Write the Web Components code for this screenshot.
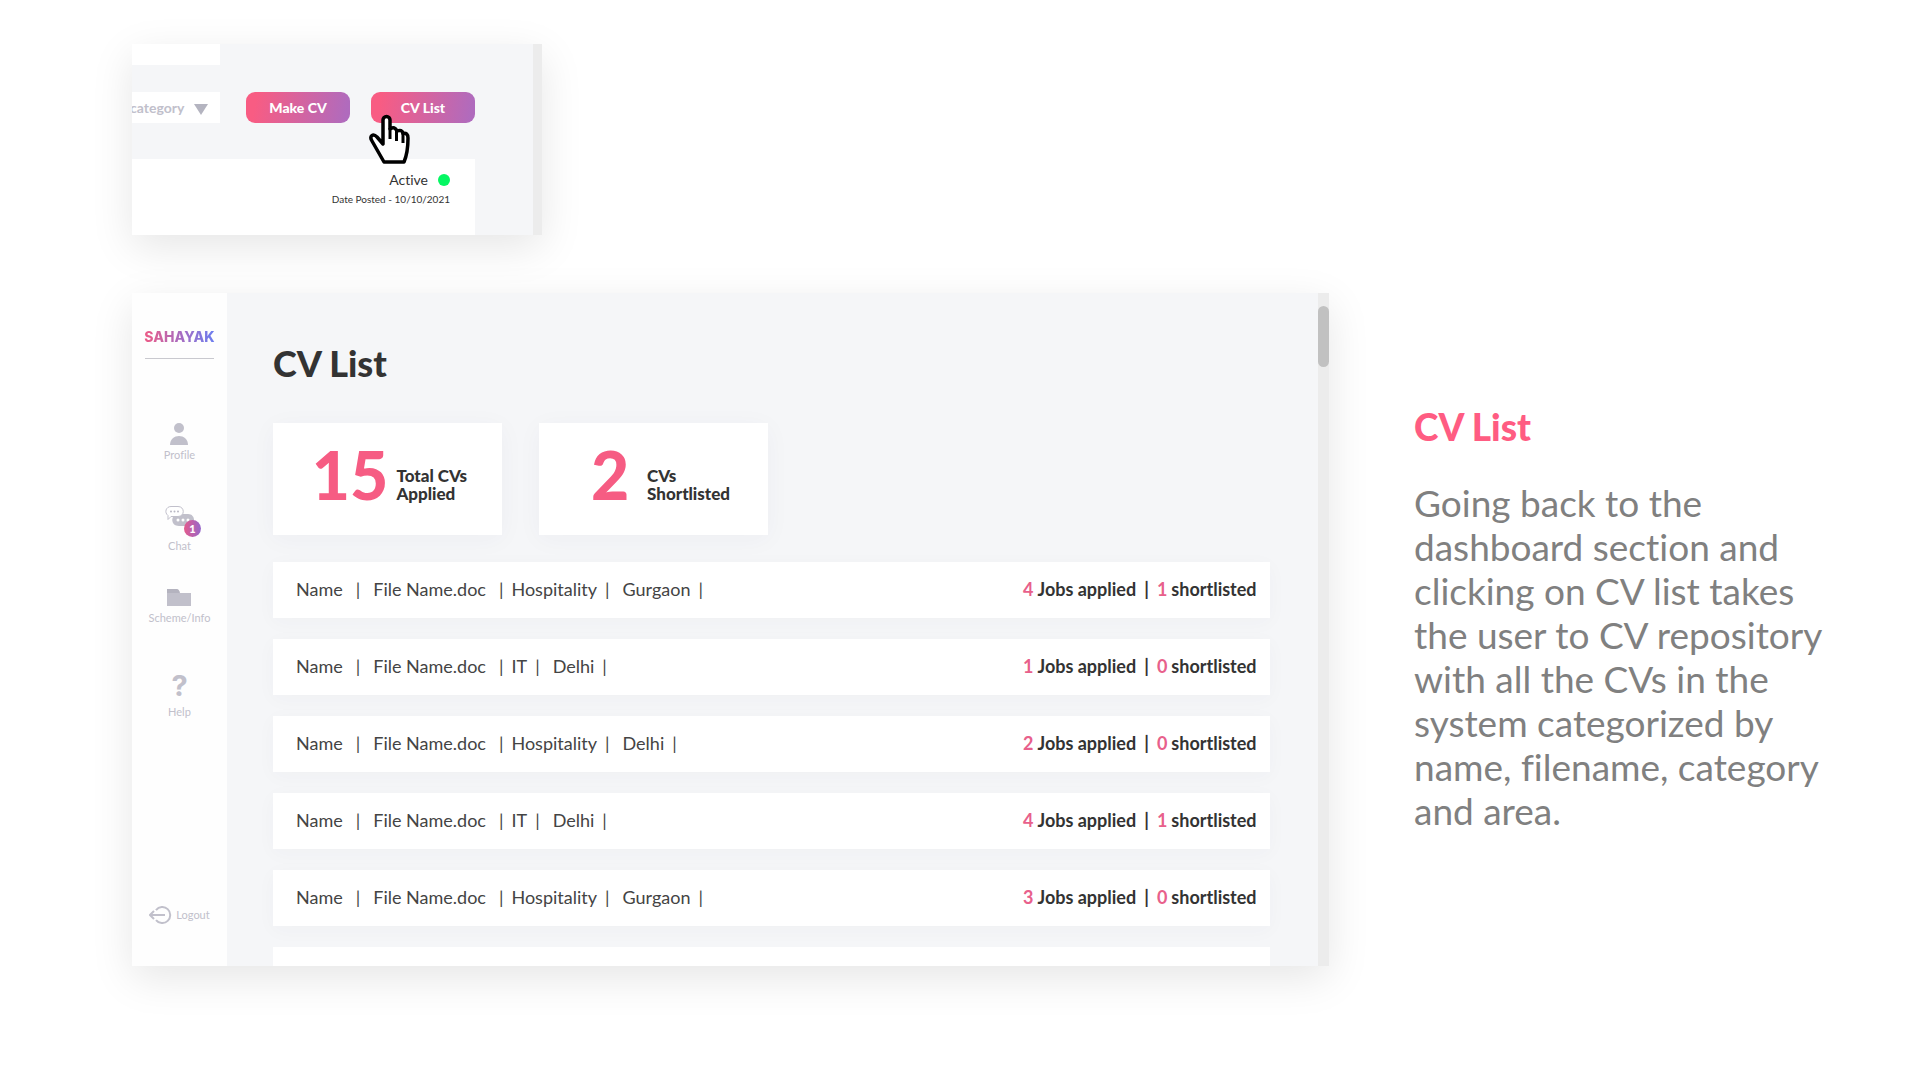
<!DOCTYPE html>
<html lang="en">
<head>
<meta charset="utf-8">
<meta name="viewport" content="width=device-width, initial-scale=1">
<title>Sahayak - CV List</title>
<style>
  * {
    box-sizing: border-box;
  }
  body {
    margin: 0;
    background: #fff;
    color: #333;
    font-family: Lato, "Open Sans", sans-serif;
    font-variant-ligatures: none;
    --pink: #f65c83;
    --violet: #b06bbd;
    --muted: #c1c0cb;
    --surface: #f5f6f8;
  }
</style>
</head>
<body>
<case-page></case-page>

<script>
'use strict'

/**
 * Base class: renders the static template of the element in its shadow root
 */
class BaseElement extends HTMLElement {
  constructor() {
    super()
    this.attachShadow({ mode: 'open' })
  }

  connectedCallback() {
    this.shadowRoot.innerHTML = `
      <style>
        *, :host { box-sizing: border-box; }
        ${this.styles()}
      </style>
      ${this.render()}
    `
  }

  styles() {
    return ''
  }

  render() {
    return '<slot></slot>'
  }
}

// Cropped window with a scrollbar on its right edge
class ScreenFrame extends BaseElement {
  styles() {
    return `
      :host {
        display: flex;
        background: var(--surface);
        box-shadow: 0 12px 40px rgba(0, 0, 0, .1);
      }
      .content {
        flex: 1;
        min-width: 0;
        display: flex;
        overflow: hidden;
      }
      .track {
        flex: none;
        width: var(--track-width, 11px);
        padding-top: 13px;
        background: #ececec;
      }
      .thumb {
        height: 61px;
        border-radius: 6px;
        background: #c1c1c1;
      }
    `
  }

  render() {
    return `
      <div class="content"><slot></slot></div>
      <div class="track">${this.hasAttribute('thumb') ? '<div class="thumb"></div>' : ''}</div>
    `
  }
}

class GradientButton extends BaseElement {
  styles() {
    return `
      :host { display: block; }
      button {
        display: block;
        width: 104px;
        height: 31px;
        padding: 0;
        border: 0;
        border-radius: 9px;
        background: linear-gradient(100deg, #f85c83 10%, var(--violet) 95%);
        color: #fff;
        font: 900 14px/31px Lato, sans-serif;
        cursor: pointer;
      }
    `
  }

  render() {
    return '<button type="button"><slot></slot></button>'
  }
}

class HandCursor extends BaseElement {
  styles() {
    return `
      :host { display: block; width: 42px; height: 50px; pointer-events: none; }
      svg { display: block; }
    `
  }

  render() {
    return `
      <svg width="42" height="50" viewBox="0 0 42 50" aria-hidden="true">
        <path d="M15 30V6a3.500 3.500 0 0 1 7 0V15q5-3 7 2q5-2 6 2.500q5-1 5 4.500c0 9-1 17-4 24H16L4 27c-3-5 1-8 5-4Z"
          fill="#fff" stroke="#000" stroke-width="3.500" stroke-linejoin="round"/>
        <path d="M22 14v11M28.500 16v11M35 19v10" fill="none" stroke="#000" stroke-width="3"/>
      </svg>
    `
  }
}

// Crop of the dashboard toolbar
class DashboardCrop extends BaseElement {
  styles() {
    return `
      :host {
        flex: 1;
        min-width: 0;
        display: flex;
        flex-direction: column;
      }
      .search {
        width: 88px;
        height: 21px;
        background: #fff;
      }
      .toolbar {
        display: flex;
        align-items: center;
        margin: 27px 58px 36px 0;
      }
      .category {
        position: relative;
        width: 88px;
        height: 31px;
        background: #fff;
      }
      select {
        appearance: none;
        display: block;
        width: 100%;
        height: 31px;
        padding: 0;
        border: 0;
        background: none;
        color: var(--muted);
        font: 700 14px/30px Lato, sans-serif;
        text-indent: -2px;
      }
      .category svg {
        position: absolute;
        top: 12px;
        right: 12px;
        pointer-events: none;
      }
      .actions {
        position: relative;
        display: flex;
        gap: 21px;
        margin-left: auto;
      }
      hand-cursor {
        position: absolute;
        top: 22px;
        left: 122px;
      }
      .job {
        margin-right: 58px;
        padding: 12px 25px 26px 0;
        background: #fff;
        text-align: right;
      }
      .status {
        display: flex;
        align-items: center;
        justify-content: flex-end;
        gap: 10px;
        font-size: 14px;
        line-height: 18px;
      }
      .dot {
        width: 12px;
        height: 12px;
        border-radius: 50%;
        background: #05f763;
      }
      .date {
        font-size: 10px;
        line-height: 20px;
      }
    `
  }

  render() {
    return `
      <div class="search"></div>
      <div class="toolbar">
        <div class="category">
          <select aria-label="category"><option>category</option></select>
          <svg width="14" height="11" viewBox="0 0 14 11" aria-hidden="true"><path d="M0 0h14L7 11Z" fill="#b4b4c0"/></svg>
        </div>
        <div class="actions">
          <gradient-button>Make CV</gradient-button>
          <gradient-button>CV List</gradient-button>
          <hand-cursor></hand-cursor>
        </div>
      </div>
      <div class="job">
        <div class="status">Active <span class="dot"></span></div>
        <div class="date">Date Posted - 10/10/2021</div>
      </div>
    `
  }
}

class NavItem extends BaseElement {
  styles() {
    return `
      :host { display: block; }
      a {
        display: flex;
        flex-direction: column;
        align-items: center;
        color: var(--muted);
        font-size: 11px;
        line-height: 12px;
        text-decoration: none;
      }
      .icon { position: relative; display: flex; }
      .badge {
        position: absolute;
        right: 0;
        bottom: 3px;
        width: 17px;
        height: 17px;
        border-radius: 50%;
        background: linear-gradient(90deg, #e45a8c, #9668cb);
        color: #fff;
        font-size: 11px;
        font-weight: 900;
        line-height: 17px;
        text-align: center;
      }
      :host([inline]) a { flex-direction: row; gap: 4px; }
    `
  }

  render() {
    const badge = this.getAttribute('badge')
    return `
      <a href="#">
        <span class="icon">
          <slot name="icon"></slot>
          ${badge ? `<span class="badge">${badge}</span>` : ''}
        </span>
        <span><slot></slot></span>
      </a>
    `
  }
}

class SideBar extends BaseElement {
  styles() {
    return `
      :host {
        flex: none;
        display: flex;
        flex-direction: column;
        align-items: center;
        width: 95px;
        padding: 35px 0 42px;
        background: #fefefe;
      }
      .logo {
        background: linear-gradient(90deg, #ee5b86, #a96bbf 50%, #6b7ef0);
        -webkit-background-clip: text;
        background-clip: text;
        color: transparent;
        font: 800 14px/18px Inter, sans-serif;
      }
      hr {
        width: 69px;
        margin: 12px 0 64px;
        border: 0;
        border-top: 1px solid #c9c9cf;
      }
      nav {
        display: flex;
        flex-direction: column;
        gap: 36px;
      }
      svg { display: block; }
      .help {
        padding-top: 8px;
        padding-bottom: 2px;
        font: 700 29px/36px Inter, sans-serif;
      }
      .logout { margin-top: auto; }
    `
  }

  render() {
    return `
      <div class="logo">SAHAYAK</div>
      <hr>
      <nav>
        <nav-item>
          <svg slot="icon" width="18" height="26" viewBox="0 0 18 26" fill="#c1c0cb">
            <circle cx="9" cy="5" r="5"/>
            <path d="M0 22c0-12 18-12 18 0Z"/>
          </svg>
          Profile
        </nav-item>
        <nav-item badge="1">
          <svg slot="icon" width="43" height="43" viewBox="-7 0 43 43">
            <path d="M14 17h9c8 0 8 12 0 12h-9c-9 0-9-12 0-12Z" fill="#c1c0cb"/>
            <path d="M6 9.500h7c7 0 7 10 0 10H6l-3 3v-4c-4-3-2-9 3-9Z" fill="#fff" stroke="#c1c0cb"/>
            <g fill="#b9b8c4"><circle cx="6" cy="14.500" r="1"/><circle cx="9.500" cy="14.500" r="1"/><circle cx="13" cy="14.500" r="1"/></g>
            <g fill="#fff"><circle cx="13" cy="23" r="1.500"/><circle cx="18" cy="23" r="1.500"/><circle cx="23" cy="23" r="1.500"/></g>
          </svg>
          Chat
        </nav-item>
        <nav-item>
          <svg slot="icon" width="24" height="24" viewBox="0 0 24 24">
            <path d="M0 1h10q2 0 3 4v3H0Z" fill="#b4b3bf"/>
            <path d="M0 5h24v13H0Z" fill="#c1c0cb"/>
          </svg>
          Scheme/Info
        </nav-item>
        <nav-item><span slot="icon" class="help">?</span>Help</nav-item>
      </nav>
      <nav-item class="logout" inline>
        <svg slot="icon" width="23" height="18" viewBox="0 0 23 18" fill="none" stroke="#c1c0cb" stroke-width="2">
          <path d="M7 4a8 8 0 1 1 0 10M16 9H1M5 5 1 9l4 4"/>
        </svg>
        Logout
      </nav-item>
    `
  }
}

class StatCard extends BaseElement {
  styles() {
    return `
      :host {
        display: flex;
        align-items: flex-end;
        justify-content: center;
        gap: 8px;
        width: 229px;
        padding: 20px 0 28px 4px;
        background: #fff;
        box-shadow: 0 4px 24px rgba(60, 60, 90, .04);
      }
      .value {
        min-width: 58px;
        color: var(--pink);
        font-size: 66px;
        font-weight: 900;
        line-height: 64px;
        text-align: center;
      }
      .label {
        padding-bottom: 4px;
        font-size: 17px;
        font-weight: 900;
        line-height: 18px;
      }
    `
  }

  render() {
    return `
      <div class="value">${this.getAttribute('value')}</div>
      <div class="label"><slot></slot></div>
    `
  }
}

class CvRow extends BaseElement {
  styles() {
    return `
      :host {
        display: flex;
        align-items: center;
        justify-content: space-between;
        height: 56px;
        flex: none;
        padding: 0 0 2px 23px;
        background: #fff;
        font-size: 18px;
        line-height: 24px;
        white-space: pre;
        box-shadow: 0 4px 20px rgba(60, 60, 90, .03);
      }
      .fields, .counts { display: flex; }
      .fields { color: #444; }
      .fields span + span { margin-left: 13px; }
      .fields .near { margin-left: 8px; }
      .counts {
        width: 247px;
        font-weight: 700;
      }
      .counts b { margin-right: 4px; color: #e8608b; font-weight: 700; }
      .counts i { margin: 0 8px; font-style: normal; }
    `
  }

  render() {
    return `
      <div class="fields">
        <span>Name</span><span>|</span><span>File Name.doc</span><span>|</span>
        <span class="near">${this.getAttribute('category')}</span><span class="near">|</span>
        <span>${this.getAttribute('area')}</span><span class="near">|</span>
      </div>
      <div class="counts">
        <b>${this.getAttribute('applied')}</b>Jobs applied<i>|</i><b>${this.getAttribute('shortlisted')}</b>shortlisted
      </div>
    `.replace(/\n\s*/g, '')
  }
}

class CvList extends BaseElement {
  static rows = [
    ['Hospitality', 'Gurgaon', 4, 1],
    ['IT', 'Delhi', 1, 0],
    ['Hospitality', 'Delhi', 2, 0],
    ['IT', 'Delhi', 4, 1],
    ['Hospitality', 'Gurgaon', 3, 0],
  ]

  styles() {
    return `
      :host {
        flex: 1;
        min-width: 0;
        display: flex;
        flex-direction: column;
        padding: 46px 48px 0 46px;
      }
      h1 {
        margin: 0 0 36px;
        font-size: 36px;
        font-weight: 900;
        line-height: 48px;
      }
      .stats {
        display: flex;
        gap: 37px;
        margin-bottom: 27px;
      }
      .rows {
        display: flex;
        flex-direction: column;
        gap: 21px;
      }
      .next {
        flex: none;
        height: 56px;
        background: #fff;
      }
    `
  }

  render() {
    const rows = CvList.rows.map(([category, area, applied, shortlisted]) => `
      <cv-row category="${category}" area="${area}" applied="${applied}" shortlisted="${shortlisted}"></cv-row>
    `)
    return `
      <h1>CV List</h1>
      <div class="stats">
        <stat-card value="15">Total CVs<br>Applied</stat-card>
        <stat-card value="2">CVs<br>Shortlisted</stat-card>
      </div>
      <div class="rows">${rows.join('')}<div class="next"></div></div>
    `
  }
}

class SideNote extends BaseElement {
  styles() {
    return `
      :host { display: block; padding-top: 110px; }
      h2 {
        margin: 0 0 30px;
        color: #ff5c82;
        font-size: 37px;
        font-weight: 900;
        line-height: 48px;
      }
      p {
        margin: 0;
        color: #808080;
        font-size: 37px;
        line-height: 44px;
        white-space: nowrap;
      }
    `
  }

  render() {
    return `
      <h2>CV List</h2>
      <p><slot></slot></p>
    `
  }
}

class CasePage extends BaseElement {
  styles() {
    return `
      :host {
        display: flex;
        flex-direction: column;
        gap: 58px;
        height: 100vh;
        min-height: 900px;
        padding: 44px 96px 114px 132px;
      }
      .crop {
        --track-width: 9px;
        align-self: flex-start;
        width: 410px;
      }
      .main {
        flex: 1;
        min-height: 0;
        display: grid;
        grid-template-columns: minmax(0, 1fr) 410px;
        grid-template-rows: minmax(0, 1fr);
        gap: 85px;
      }
    `
  }

  render() {
    return `
      <screen-frame class="crop"><dashboard-crop></dashboard-crop></screen-frame>
      <div class="main">
        <screen-frame thumb>
          <side-bar></side-bar>
          <cv-list></cv-list>
        </screen-frame>
        <side-note>Going back to the<br>dashboard section and<br>clicking on CV list takes<br>the user to CV repository<br>with all the CVs in the<br>system categorized by<br>name, filename, category<br>and area.</side-note>
      </div>
    `
  }
}

customElements.define('screen-frame', ScreenFrame)
customElements.define('gradient-button', GradientButton)
customElements.define('hand-cursor', HandCursor)
customElements.define('dashboard-crop', DashboardCrop)
customElements.define('nav-item', NavItem)
customElements.define('side-bar', SideBar)
customElements.define('stat-card', StatCard)
customElements.define('cv-row', CvRow)
customElements.define('cv-list', CvList)
customElements.define('side-note', SideNote)
customElements.define('case-page', CasePage)
</script>
</body>
</html>
